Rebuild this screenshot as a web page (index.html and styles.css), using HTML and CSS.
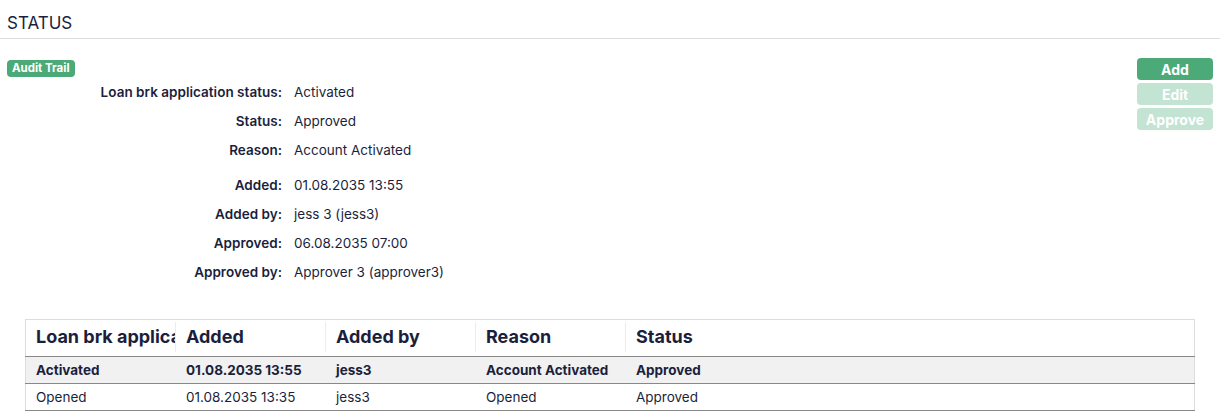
FILE: index.html
```html
<!DOCTYPE html>
<html>
<head>
<meta charset="utf-8">
<link rel="stylesheet" href="styles.css">
</head>
<body>
<div class="page">
  <h2 class="section-title">STATUS</h2>
  <div class="section-body">
    <div class="details">
      <span class="badge">Audit Trail</span>
      <div class="field-grid">
        <div class="label">Loan brk application status:</div><div class="value">Activated</div>
        <div class="label">Status:</div><div class="value">Approved</div>
        <div class="label">Reason:</div><div class="value">Account Activated</div>
      </div>
      <div class="field-grid group2">
        <div class="label">Added:</div><div class="value">01.08.2035 13:55</div>
        <div class="label">Added by:</div><div class="value">jess 3 (jess3)</div>
        <div class="label">Approved:</div><div class="value">06.08.2035 07:00</div>
        <div class="label">Approved by:</div><div class="value">Approver 3 (approver3)</div>
      </div>
    </div>
    <div class="actions">
      <button class="btn">Add</button>
      <button class="btn disabled">Edit</button>
      <button class="btn disabled">Approve</button>
    </div>
  </div>
  <div class="table-wrap">
    <table class="grid">
      <thead>
        <tr>
          <th><div class="th-in">Loan brk application status</div></th>
          <th><div class="th-in">Added</div></th>
          <th><div class="th-in">Added by</div></th>
          <th><div class="th-in">Reason</div></th>
          <th><div class="th-in last">Status</div></th>
          <th class="filler"></th>
        </tr>
      </thead>
      <tbody>
        <tr class="current">
          <td>Activated</td><td>01.08.2035 13:55</td><td>jess3</td><td>Account Activated</td><td>Approved</td><td></td>
        </tr>
        <tr>
          <td>Opened</td><td>01.08.2035 13:35</td><td>jess3</td><td>Opened</td><td>Approved</td><td></td>
        </tr>
      </tbody>
    </table>
  </div>
</div>
</body>
</html>
```
FILE: styles.css
```css
html, body {
  margin: 0;
  padding: 0;
  background: #fff;
}
body {
  font-family: Inter, "Liberation Sans", sans-serif;
  color: #1b1f3d;
  font-size: 13.5px;
}
.section-title {
  margin: 0;
  padding: 13px 7px 4px;
  font-size: 17px;
  font-weight: 400;
  line-height: 21px;
  border-bottom: 1px solid #dedede;
}
.section-body {
  display: flex;
  justify-content: space-between;
  padding: 20px 7px 0 7px;
}
.badge {
  display: inline-block;
  background: #4caa78;
  color: #fff;
  font-weight: 700;
  font-size: 11.5px;
  line-height: 17px;
  height: 17px;
  padding: 0 5px;
  border-radius: 4px;
  margin-top: 1px;
}
.field-grid {
  display: grid;
  grid-template-columns: 275px auto;
  column-gap: 12px;
  grid-auto-rows: 29px;
  align-items: center;
}
.group2 {
  margin-top: 6px;
}
.label {
  text-align: right;
  font-weight: 600;
  letter-spacing: 0.02px;
}
.actions {
  display: flex;
  flex-direction: column;
  gap: 3px;
  margin-top: -1px;
}
.btn {
  width: 76px;
  height: 22px;
  border: none;
  border-radius: 4px;
  background: #4caa78;
  color: #fff;
  font-family: Inter, "Liberation Sans", sans-serif;
  font-weight: 700;
  font-size: 14px;
  padding: 0;
}
.btn.disabled {
  background: #c3e3d3;
}
.table-wrap {
  padding: 33px 25px 0 25px;
}
.grid {
  width: 100%;
  border-collapse: collapse;
  table-layout: fixed;
  border: 1px solid #dddddd;
  border-bottom: none;
}
.grid th {
  width: 150px;
  height: 36px;
  padding: 0;
  text-align: left;
  font-size: 18px;
  font-weight: 700;
  border-bottom: 1px solid #888;
  position: relative;
  vertical-align: middle;
}
.grid th.filler {
  width: auto;
}
.th-in {
  padding: 0 0 0 10px;
  white-space: nowrap;
  overflow: hidden;
  border-right: 1px solid #ececec;
  height: 30px;
  line-height: 30px;
  margin-top: -6px;
  position: relative;
  top: 2px;
}
.th-in.last {
  border-right: none;
}
.grid td {
  height: 26px;
  padding: 0 0 0 10px;
  white-space: nowrap;
  overflow: hidden;
  border-bottom: 1px solid #888;
}
.grid tr.current td {
  background: #f1f1f1;
  font-weight: 700;
}
```
